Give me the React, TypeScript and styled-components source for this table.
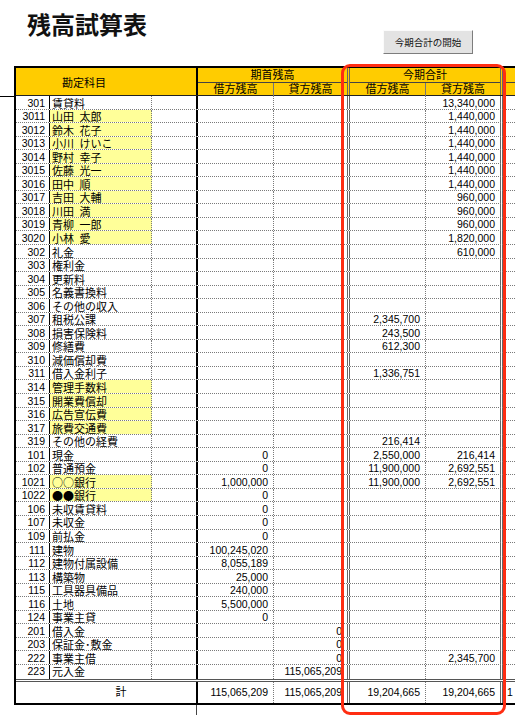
import React from 'react';
import styled, { createGlobalStyle } from 'styled-components';

const Global = createGlobalStyle`
  *, *::before, *::after { box-sizing: border-box; }
  html, body { margin: 0; padding: 0; background: #fff; }
  body { font-family: "Liberation Sans", "Noto Sans CJK JP", sans-serif; color: #000; }
`;

const Page = styled.div`
  position: relative;
  width: 515px;
  height: 715px;
  overflow: hidden;
  background: #fff;
`;

const TopBar = styled.div`
  display: flex;
  align-items: flex-start;
  height: 66px;
`;

const Title = styled.h1`
  margin: 12px 0 0 27px;
  font: 700 24px/24px "Noto Sans CJK JP", sans-serif;
  color: #111;
`;

const StartButton = styled.button`
  margin: 30px 42px 0 auto;
  width: 90px;
  height: 24px;
  padding: 0;
  background: #e3e3e3;
  border: 1px solid;
  border-color: #fbfbfb #7d7d7d #7d7d7d #fbfbfb;
  font: 9.5px/22px "Noto Sans CJK JP", sans-serif;
  color: #111;
`;

const Sheet = styled.div`
  display: flex;
`;

const Gutter = styled.div`
  flex: none;
  width: 14px;
`;

const GutterTick = styled.div`
  margin-top: 30px;
  border-top: 1px solid #000;
`;

const SheetBody = styled.div`
  flex: 1;
  min-width: 0;
`;

const Table = styled.div`
  overflow: hidden;
  border-top: 2px solid #000;
  border-left: 2px solid #000;
  border-bottom: 2px solid #000;
`;

/* ---------- header ---------- */
const HeadRow = styled.div`
  display: flex;
  height: 28px;
  background: #ffcc00;
  border-bottom: 1px solid #222;
  font-size: 11px;
`;

const AccountHead = styled.div`
  flex: none;
  width: 182px;
  padding: 1px 44px 0 0;
  display: flex;
  align-items: center;
  justify-content: center;
  border-right: 2px solid #000;
`;

const Group = styled.div<{ $w: number }>`
  flex: none;
  width: ${p => p.$w}px;
  display: flex;
  flex-direction: column;
  border-right: 3px double #666;
`;

const GroupTitle = styled.div`
  height: 15px;
  border-bottom: 1px solid #444;
  text-align: center;
  line-height: 15px;
`;

const SubRow = styled.div`
  flex: 1;
  display: flex;
`;

const SubCell = styled.div<{ $w?: number; $line?: boolean }>`
  flex: ${p => (p.$w ? 'none' : '1')};
  width: ${p => (p.$w ? `${p.$w}px` : 'auto')};
  text-align: center;
  line-height: 13px;
  border-right: ${p => (p.$line ? '1px solid #777' : 'none')};
`;

const RestHead = styled.div`
  flex: 1;
  display: flex;
  flex-direction: column;
`;

/* ---------- body ---------- */
const Row = styled.div`
  display: flex;
  height: 13.56px;
  line-height: 12.5px;
  border-bottom: 1px dotted #7a7a7a;
  &:last-child {
    border-bottom: none;
  }
`;

const CodeCell = styled.div`
  flex: none;
  width: 34px;
  padding: 0.5px 4px 0 0;
  text-align: right;
  font-size: 10.5px;
  border-right: 1px solid #000;
`;

const NameCell = styled.div<{ $hl?: boolean }>`
  flex: none;
  width: 102px;
  padding: 1.5px 0 0 2px;
  font-size: 11px;
  white-space: nowrap;
  background: ${p => (p.$hl ? '#ffff99' : 'transparent')};
  border-right: 1px dotted #7a7a7a;
`;

const Mark = styled.span`
  font-family: "Noto Sans CJK JP", sans-serif;
  font-size: 11px;
  line-height: 1;
`;

const SpareCell = styled.div`
  flex: none;
  width: 46px;
  border-right: 2px solid #000;
`;

const NumCell = styled.div<{ $w: number; $edge: 'dotted' | 'double' }>`
  flex: none;
  width: ${p => p.$w}px;
  padding: 0.5px 5px 0 0;
  text-align: right;
  font-size: 10.5px;
  white-space: nowrap;
  overflow: hidden;
  border-right: ${p => (p.$edge === 'double' ? '3px double #666' : '1px dotted #7a7a7a')};
`;

const RestCell = styled.div`
  flex: 1;
  padding-left: 4px;
  font-size: 10.5px;
  white-space: nowrap;
  overflow: hidden;
`;

const TotalRow = styled.div`
  display: flex;
  height: 24px;
  line-height: 21px;
  border-top: 3px double #555;
`;

const TotalLabel = styled.div`
  flex: none;
  width: 182px;
  padding-left: 30px;
  text-align: center;
  font-size: 11px;
  border-right: 2px solid #000;
`;

const Tail = styled.div`
  margin-left: 182px;
  height: 12px;
  border-left: 1px solid #444;
`;

const Highlight = styled.div`
  position: absolute;
  left: 341px;
  top: 64px;
  width: 165px;
  height: 651px;
  border: 3px solid #ff2d12;
  border-radius: 9px;
  pointer-events: none;
`;

type Line = [string, React.ReactNode, boolean, string, string, string, string];

const S = '\u2002';

const rows: Line[] = [
  ['301', '賃貸料', false, '', '', '', '13,340,000'],
  ['3011', `山田${S}太郎`, true, '', '', '', '1,440,000'],
  ['3012', `鈴木${S}花子`, true, '', '', '', '1,440,000'],
  ['3013', `小川${S}けいこ`, true, '', '', '', '1,440,000'],
  ['3014', `野村${S}幸子`, true, '', '', '', '1,440,000'],
  ['3015', `佐藤${S}光一`, true, '', '', '', '1,440,000'],
  ['3016', `田中${S}順`, true, '', '', '', '1,440,000'],
  ['3017', `吉田${S}大輔`, true, '', '', '', '960,000'],
  ['3018', `川田${S}満`, true, '', '', '', '960,000'],
  ['3019', `青柳${S}一郎`, true, '', '', '', '960,000'],
  ['3020', `小林${S}愛`, true, '', '', '', '1,820,000'],
  ['302', '礼金', false, '', '', '', '610,000'],
  ['303', '権利金', false, '', '', '', ''],
  ['304', '更新料', false, '', '', '', ''],
  ['305', '名義書換料', false, '', '', '', ''],
  ['306', 'その他の収入', false, '', '', '', ''],
  ['307', '租税公課', false, '', '', '2,345,700', ''],
  ['308', '損害保険料', false, '', '', '243,500', ''],
  ['309', '修繕費', false, '', '', '612,300', ''],
  ['310', '減価償却費', false, '', '', '', ''],
  ['311', '借入金利子', false, '', '', '1,336,751', ''],
  ['314', '管理手数料', true, '', '', '', ''],
  ['315', '開業費償却', true, '', '', '', ''],
  ['316', '広告宣伝費', true, '', '', '', ''],
  ['317', '旅費交通費', true, '', '', '', ''],
  ['319', 'その他の経費', false, '', '', '216,414', ''],
  ['101', '現金', false, '0', '', '2,550,000', '216,414'],
  ['102', '普通預金', false, '0', '', '11,900,000', '2,692,551'],
  ['1021', <><Mark>○○</Mark>銀行</>, true, '1,000,000', '', '11,900,000', '2,692,551'],
  ['1022', <><Mark>●●</Mark>銀行</>, true, '0', '', '', ''],
  ['106', '未収賃貸料', false, '0', '', '', ''],
  ['107', '未収金', false, '0', '', '', ''],
  ['109', '前払金', false, '0', '', '', ''],
  ['111', '建物', false, '100,245,020', '', '', ''],
  ['112', '建物付属設備', false, '8,055,189', '', '', ''],
  ['113', '構築物', false, '25,000', '', '', ''],
  ['115', '工具器具備品', false, '240,000', '', '', ''],
  ['116', '土地', false, '5,500,000', '', '', ''],
  ['124', '事業主貸', false, '0', '', '', ''],
  ['201', '借入金', false, '', '0', '', ''],
  ['203', '保証金･敷金', false, '', '0', '', ''],
  ['222', '事業主借', false, '', '0', '', '2,345,700'],
  ['223', '元入金', false, '', '115,065,209', '', ''],
];

const cols: { w: number; edge: 'dotted' | 'double' }[] = [
  { w: 76, edge: 'dotted' },
  { w: 76, edge: 'double' },
  { w: 76, edge: 'dotted' },
  { w: 77, edge: 'double' },
];

const totals = ['115,065,209', '115,065,209', '19,204,665', '19,204,665'];

export default function App() {
  return (
    <Page>
      <Global />
      <TopBar>
        <Title>残高試算表</Title>
        <StartButton type="button">今期合計の開始</StartButton>
      </TopBar>
      <Sheet>
        <Gutter>
          <GutterTick />
        </Gutter>
        <SheetBody>
          <Table>
            <HeadRow>
              <AccountHead>勘定科目</AccountHead>
              <Group $w={152}>
                <GroupTitle>期首残高</GroupTitle>
                <SubRow>
                  <SubCell $w={76} $line>借方残高</SubCell>
                  <SubCell>貸方残高</SubCell>
                </SubRow>
              </Group>
              <Group $w={153}>
                <GroupTitle>今期合計</GroupTitle>
                <SubRow>
                  <SubCell $w={76} $line>借方残高</SubCell>
                  <SubCell>貸方残高</SubCell>
                </SubRow>
              </Group>
              <RestHead>
                <GroupTitle />
              </RestHead>
            </HeadRow>
            <div>
              {rows.map(([code, name, hl, ...nums]) => (
                <Row key={code}>
                  <CodeCell>{code}</CodeCell>
                  <NameCell $hl={hl}>{name}</NameCell>
                  <SpareCell />
                  {nums.map((n, i) => (
                    <NumCell key={i} $w={cols[i].w} $edge={cols[i].edge}>
                      {n}
                    </NumCell>
                  ))}
                  <RestCell />
                </Row>
              ))}
            </div>
            <TotalRow>
              <TotalLabel>計</TotalLabel>
              {totals.map((n, i) => (
                <NumCell key={i} $w={cols[i].w} $edge={cols[i].edge}>
                  {n}
                </NumCell>
              ))}
              <RestCell>1</RestCell>
            </TotalRow>
          </Table>
          <Tail />
        </SheetBody>
      </Sheet>
      <Highlight />
    </Page>
  );
}
